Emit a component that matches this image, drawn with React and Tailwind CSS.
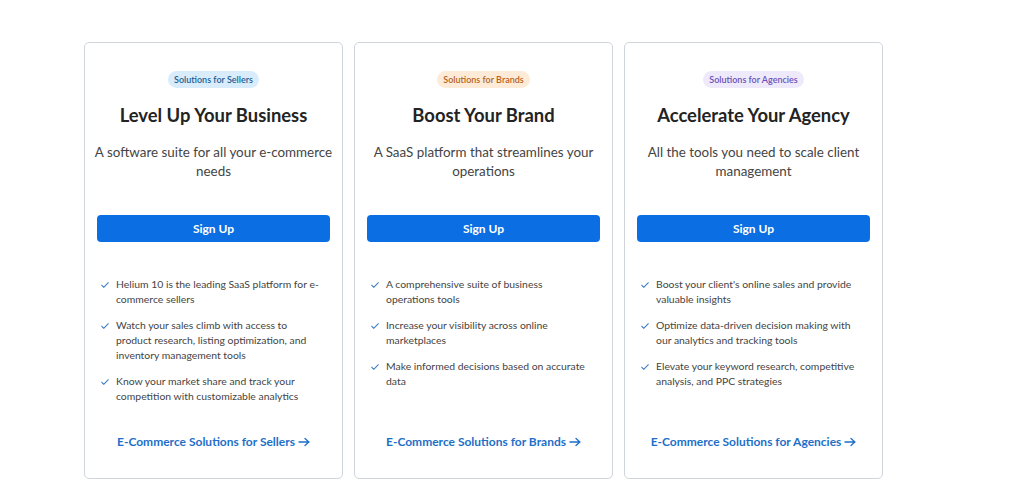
import React from "react";

const cards = [
  {
    badge: "Solutions for Sellers",
    badgeClass: "bg-[#d9ecfc] text-[#1d5f93]",
    title: "Level Up Your Business",
    sub: "A software suite for all your e-commerce needs",
    items: [
      "Helium 10 is the leading SaaS platform for e-commerce sellers",
      "Watch your sales climb with access to product research, listing optimization, and inventory management tools",
      "Know your market share and track your competition with customizable analytics",
    ],
    link: "E-Commerce Solutions for Sellers",
  },
  {
    badge: "Solutions for Brands",
    badgeClass: "bg-[#fdebd8] text-[#b5631d]",
    title: "Boost Your Brand",
    sub: "A SaaS platform that streamlines your operations",
    items: [
      "A comprehensive suite of business operations tools",
      "Increase your visibility across online marketplaces",
      "Make informed decisions based on accurate data",
    ],
    link: "E-Commerce Solutions for Brands",
  },
  {
    badge: "Solutions for Agencies",
    badgeClass: "bg-[#eee9fb] text-[#6a52b8]",
    title: "Accelerate Your Agency",
    sub: "All the tools you need to scale client management",
    items: [
      "Boost your client's online sales and provide valuable insights",
      "Optimize data-driven decision making with our analytics and tracking tools",
      "Elevate your keyword research, competitive analysis, and PPC strategies",
    ],
    link: "E-Commerce Solutions for Agencies",
  },
];

const Check = () => (
  <svg width="10" height="10" viewBox="0 0 24 24" fill="none" stroke="#3b7cc4" strokeWidth="2.5" strokeLinecap="round" strokeLinejoin="round" className="mt-[3px] shrink-0">
    <path d="M4 12.5l5 5L20 6.5" />
  </svg>
);

const Card = ({ c }) => (
  <div className="w-[259px] h-[437px] border border-[#cfd5db] rounded-[5px] bg-white flex flex-col items-center px-[12px] pt-[28px]">
    <span className={`${c.badgeClass} text-[9px] font-semibold rounded-full px-[6px] h-[17px] leading-[17px]`}>
      {c.badge}
    </span>
    <h2 className="mt-[15px] text-[18.4px] font-bold text-[#232323] leading-[24px]">{c.title}</h2>
    <p className="mt-[16px] -mx-[6px] text-[13.4px] leading-[19px] text-[#444] text-center">{c.sub}</p>
    <button className="mt-[34px] w-full h-[27px] rounded-[4px] bg-[#0b6fe3] text-white text-[12px] font-bold">
      Sign Up
    </button>
    <ul className="mt-[35px] w-full pl-[3px] pr-[9px] flex flex-col gap-[11px]">
      {c.items.map((t) => (
        <li key={t} className="flex gap-[6px] text-[10.4px] leading-[15px] text-[#444]">
          <Check />
          <span>{t}</span>
        </li>
      ))}
    </ul>
    <div className="mt-auto mb-[27px] flex items-center gap-[3px] text-[12px] font-bold text-[#1e6fc8]">
      {c.link}
      <svg width="12" height="10" viewBox="0 0 12 10" fill="none" stroke="#1e6fc8" strokeWidth="1.3" strokeLinecap="round" strokeLinejoin="round">
        <path d="M1 5h10M7 1.5L10.8 5 7 8.5" />
      </svg>
    </div>
  </div>
);

export default function App() {
  return (
    <div className="w-[1024px] h-[480px] bg-white overflow-hidden" style={{ fontFamily: "Lato, 'Open Sans', sans-serif" }}>
      <div className="flex gap-[11px] pl-[84px] pt-[42px]">
        {cards.map((c) => (
          <Card key={c.title} c={c} />
        ))}
      </div>
    </div>
  );
}
